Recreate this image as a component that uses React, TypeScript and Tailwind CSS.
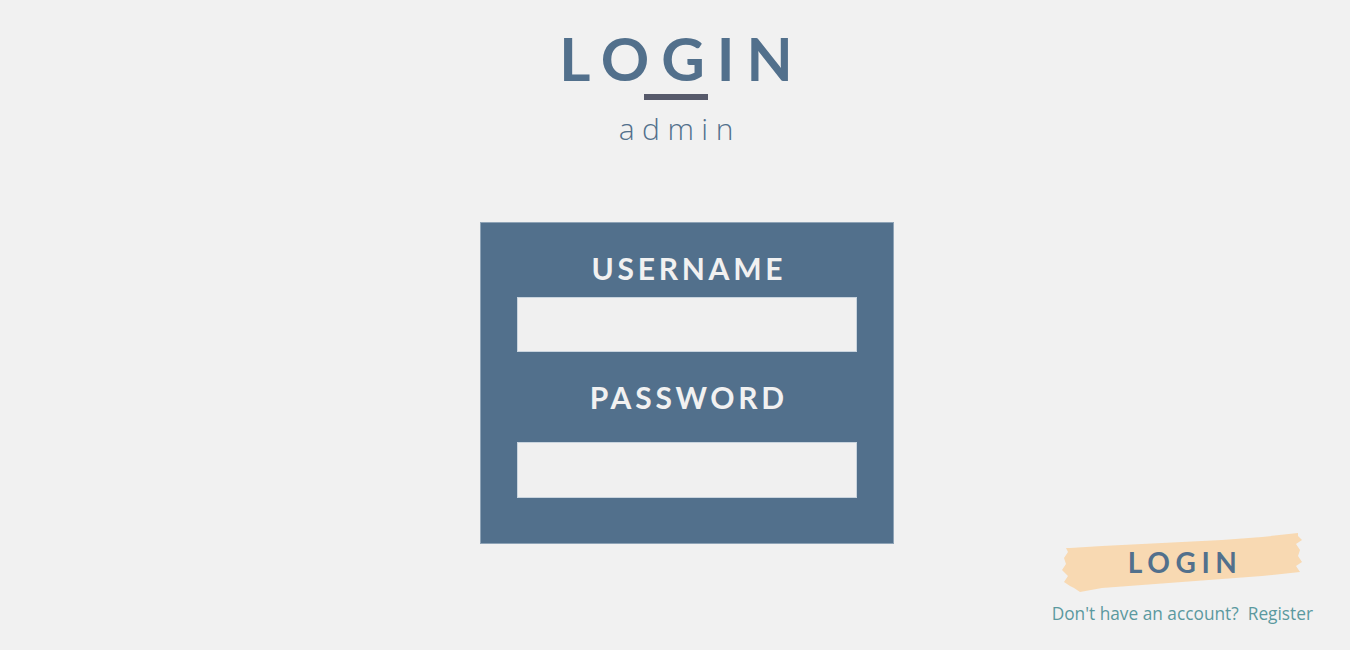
import React from "react";

function Brush() {
  return (
    <svg width="240" height="60" viewBox="0 0 240 60" className="absolute inset-0" aria-hidden>
      <path
        d="M8 16 L40 14 L80 12 L120 10 L160 8 L200 5 L236 1 L236 4 L240 8 L234 12 L238 18 L236 24 L240 30 L234 34 L238 40 L200 44 L160 47 L120 50 L80 53 L40 56 L18 60 L12 56 L8 54 L2 50 L6 44 L0 38 L4 32 L2 26 L6 20 L4 16 Z"
        fill="#f8d9b2"
      />
    </svg>
  );
}

export default function App() {
  return (
    <div
      className="w-full h-[650px] bg-[#f1f1f1] flex flex-col overflow-hidden"
      style={{ fontFamily: "Lato, 'Liberation Sans', sans-serif" }}
    >
      <header className="pt-[28px] flex flex-col items-center pl-[2px]">
        <h1 className="text-[60px] leading-none font-bold tracking-[0.2em] pl-[0.2em] text-[#52708c]">
          LOGIN
        </h1>
        <div className="w-[64px] h-[6px] bg-[#575a6b] mt-[6px]" />
        <div
          className="mt-[14px] text-[30px] leading-none font-light tracking-[0.25em] pl-[0.25em] text-[#52708c]"
          style={{ fontFamily: "'Open Sans', sans-serif" }}
        >
          admin
        </div>
      </header>

      <div className="grid grid-cols-[480px_414px_1fr] flex-1 mt-[78px]">
        <div />
        <form className="self-start bg-[#52708c] border border-[#8ea3b6] flex flex-col items-center pt-[30px] pb-[45px] px-[36px]">
          <label className="text-[30px] leading-none font-bold tracking-[0.125em] pl-[0.125em] text-[#f1f1f1]">
            USERNAME
          </label>
          <input
            className="mt-[14px] w-full h-[55px] bg-[#f0f0f0] border border-[#c9d4de] outline-none"
            type="text"
          />
          <label className="mt-[30px] text-[30px] leading-none font-bold tracking-[0.125em] pl-[0.125em] text-[#f1f1f1]">
            PASSWORD
          </label>
          <input
            className="mt-[30px] w-full h-[56px] bg-[#f0f0f0] border border-[#c9d4de] outline-none"
            type="password"
          />
        </form>
        <div className="flex flex-col justify-end items-end pr-[37px] pb-[24px]">
          <div className="flex flex-col items-center">
            <button className="relative w-[240px] h-[60px] flex items-center justify-center">
              <Brush />
              <span className="relative text-[28px] leading-none font-bold tracking-[0.2em] pl-[0.2em] text-[#52708c]">
                LOGIN
              </span>
            </button>
            <div
              className="mt-[10px] text-[17.3px] leading-[24px] text-[#5b999f] whitespace-pre"
              style={{ fontFamily: "'Open Sans', sans-serif" }}
            >
              {"Don't have an account?  Register"}
            </div>
          </div>
        </div>
      </div>
    </div>
  );
}
